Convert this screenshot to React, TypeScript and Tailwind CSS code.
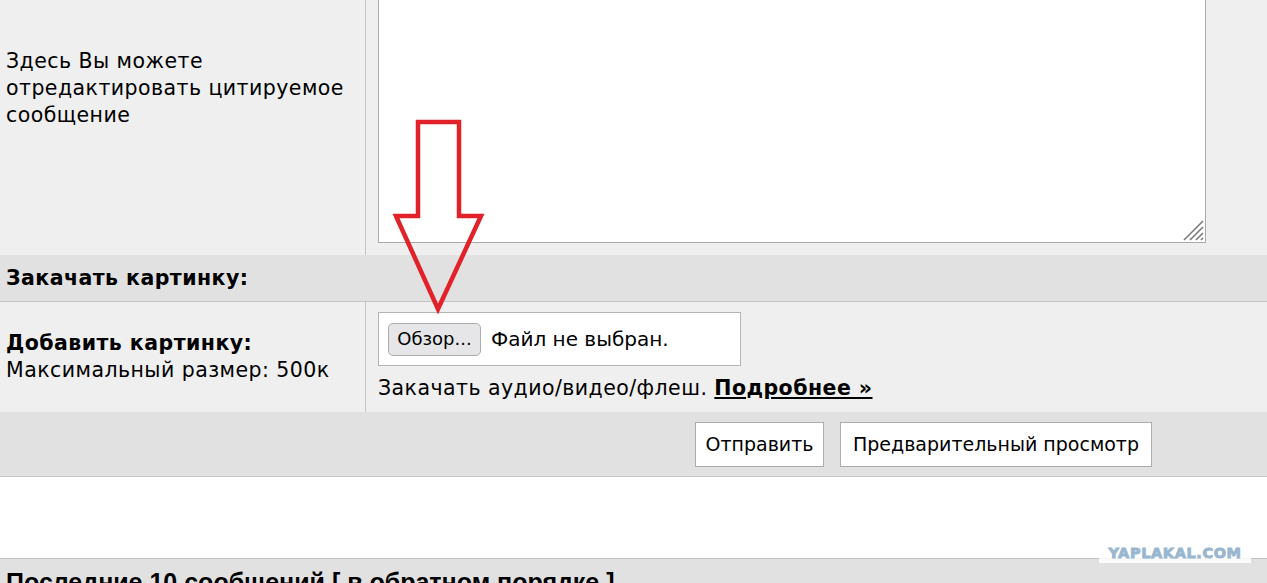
import React from 'react';

const ROW_BG = 'bg-[#efefef]';

const ResizeGrip: React.FC = () => (
  <svg className="absolute right-[1px] bottom-[1px]" width="22" height="22" viewBox="0 0 22 22">
    <g stroke="#7a7a7a" strokeWidth="1.6">
      <line x1="21" y1="2" x2="2" y2="21" />
      <line x1="21" y1="8" x2="8" y2="21" />
      <line x1="21" y1="14" x2="14" y2="21" />
      <line x1="21" y1="19" x2="19" y2="21" />
    </g>
  </svg>
);

const DownArrow: React.FC = () => (
  <svg className="absolute left-[390px] top-[115px]" width="100" height="205" viewBox="0 0 100 205">
    <polygon
      points="28,7 69,7 69,101 91,101 48,194 6,101 28,101"
      fill="none"
      stroke="#e1222b"
      strokeWidth="4.5"
      strokeLinejoin="miter"
    />
  </svg>
);

export default function App() {
  return (
    <div className="relative h-[583px] w-full overflow-hidden bg-white text-[20.5px] leading-[27px] tracking-[0.45px] text-black font-['DejaVu_Sans',sans-serif]">
      <div className="-mt-[78px]">
        {/* quoted message editor */}
        <div className={`flex ${ROW_BG}`}>
          <div className="flex w-[366px] shrink-0 items-center border-r border-[#c4c4c4] px-[6px]">
            <p>
              Здесь Вы можете
              <br />
              отредактировать цитируемое
              <br />
              сообщение
            </p>
          </div>
          <div className="py-[12px] pl-[12px]">
            <div className="relative h-[309px] w-[828px] border border-[#a9a9a9] bg-white">
              <textarea className="h-full w-full resize-none bg-transparent outline-none" />
              <ResizeGrip />
            </div>
          </div>
        </div>

        {/* upload section header */}
        <div className="flex h-[47px] items-center border-b border-[#c4c4c4] bg-[#e1e1e1] px-[6px] font-bold">
          Закачать картинку:
        </div>

        {/* file input row */}
        <div className={`flex ${ROW_BG}`}>
          <div className="flex w-[366px] shrink-0 flex-col justify-center border-r border-[#c4c4c4] px-[6px]">
            <span className="font-bold">Добавить картинку:</span>
            <span>Максимальный размер: 500к</span>
          </div>
          <div className="pt-[10px] pb-[10px] pl-[12px]">
            <div className="flex h-[54px] w-[363px] items-center border border-[#b4b4b4] bg-white pl-[9px] text-[20px] tracking-normal">
              <button className="h-[33px] w-[93px] rounded-[5px] border border-[#adadad] bg-[#e6e6e8] text-[18px] leading-none">
                Обзор...
              </button>
              <span className="ml-[10px]">Файл не выбран.</span>
            </div>
            <p className="mt-[9px]">
              Закачать аудио/видео/флеш.{' '}
              <a className="font-bold underline">Подробнее »</a>
            </p>
          </div>
        </div>

        {/* submit buttons */}
        <div className="flex gap-[16px] border-b border-[#c4c4c4] bg-[#e1e1e1] pt-[10px] pb-[9px] pl-[695px] text-[19px] tracking-normal">
          <button className="h-[45px] w-[129px] border border-[#acacac] bg-white">Отправить</button>
          <button className="h-[45px] w-[312px] border border-[#acacac] bg-white">Предварительный просмотр</button>
        </div>

        <div className="h-[81px] bg-white" />

        <div className="border-t border-[#c4c4c4] bg-[#e1e1e1] px-[6px] pt-[10px] text-[25px] font-bold tracking-normal font-['Liberation_Sans',sans-serif]">
          Последние 10 сообщений [ в обратном порядке ]
        </div>
      </div>

      <DownArrow />

      <div className="absolute left-[1099px] top-[543px] flex h-[20px] w-[152px] items-center justify-center bg-white/85">
        <span className="text-[14.5px] leading-none font-bold tracking-[0.6px] text-[#99b7d0] [-webkit-text-stroke:0.9px_#99b7d0] font-['DejaVu_Sans',sans-serif]">
          YAPLAKAL.COM
        </span>
      </div>
    </div>
  );
}
